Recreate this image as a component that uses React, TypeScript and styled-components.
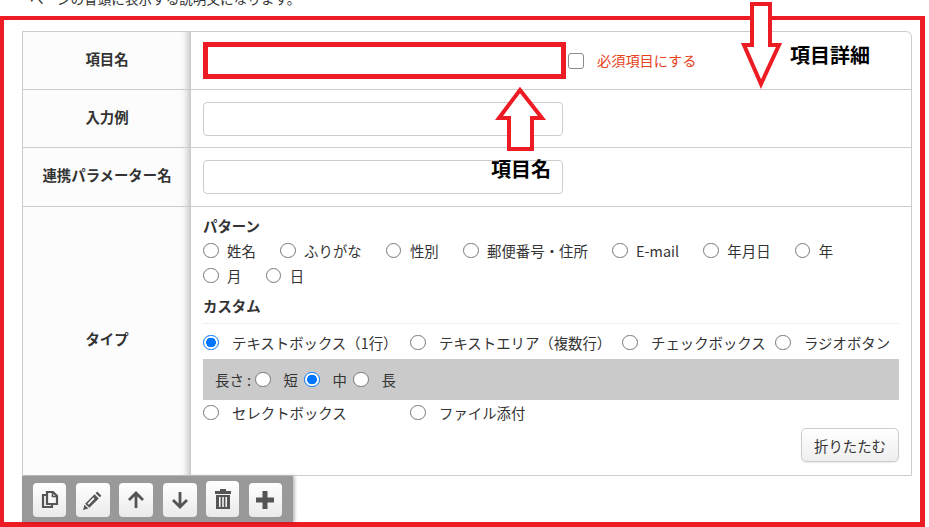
import styled, { createGlobalStyle } from "styled-components";

const GlobalStyle = createGlobalStyle`
  html, body {
    margin: 0;
    padding: 0;
    background: #fff;
    overflow: hidden;
  }
  body {
    font-family: "Noto Sans CJK JP", "Noto Sans", sans-serif;
    font-size: 14.4px;
    color: #333;
  }
`;

const Page = styled.div`
  position: relative;
  width: 929px;
  height: 527px;
  overflow: hidden;
`;

const Caption = styled.p`
  height: 16px;
  margin: 0;
  padding: 0 0 11px 30px;
  box-sizing: border-box;
  display: flex;
  align-items: flex-end;
  font-size: 13.6px;
  line-height: 14px;
  white-space: nowrap;
`;

const Frame = styled.div`
  width: 925px;
  height: 511px;
  box-sizing: border-box;
  border: solid #ed1c24;
  border-width: 4px 5px 5px 4px;
  padding: 11px 8px 0 18px;
`;

const Table = styled.div`
  border: 1px solid #ccc;
  border-radius: 0 6px 0 0;
  overflow: hidden;
`;

const Row = styled.div<{ $height: number }>`
  display: grid;
  grid-template-columns: 168px 1fr;
  height: ${(p) => p.$height}px;
  border-top: 1px solid #ccc;

  &:first-child {
    border-top: 0;
  }
`;

const Label = styled.div`
  display: flex;
  align-items: center;
  justify-content: center;
  padding-bottom: 3px;
  background: #fcfcfc;
  box-shadow: inset -10px 0 8px -8px rgba(0, 0, 0, 0.3);
  font-weight: 700;
  font-size: 14.4px;
  line-height: 1;
  color: #333;
`;

const Cell = styled.div`
  display: flex;
  align-items: center;
  padding-left: 12px;
`;

const TextInput = styled.input<{ $marked?: boolean }>`
  box-sizing: border-box;
  margin: 0;
  background: #fff;
  outline: none;
  width: ${(p) => (p.$marked ? 363 : 360)}px;
  height: ${(p) => (p.$marked ? 37 : 34)}px;
  border: ${(p) => (p.$marked ? "5px solid #ed1c24" : "1px solid #ccc")};
  border-radius: ${(p) => (p.$marked ? 0 : 4)}px;
`;

const Checkbox = styled.input`
  appearance: none;
  box-sizing: border-box;
  width: 16px;
  height: 16px;
  margin: 1px 13px 0 2px;
  background: #fff;
  border: 1.5px solid #8a8a8a;
  border-radius: 3px;
`;

const Required = styled.span`
  color: #e5431b;
  font-size: 14.2px;
  line-height: 1;
`;

const TypeCell = styled.div`
  padding: 10px 12px 0;
`;

const GroupTitle = styled.div`
  font-weight: 700;
  font-size: 14.4px;
  line-height: 18px;
  color: #333;
`;

const PatternList = styled.div`
  display: flex;
  flex-wrap: wrap;
  column-gap: 24.3px;
  padding-right: 40px;
  margin: 3px 0 9px;
`;

const RadioItem = styled.label<{ $gap?: number }>`
  display: inline-flex;
  align-items: center;
  height: 25px;
  column-gap: ${(p) => p.$gap ?? 8.5}px;
  font-size: 14.4px;
  white-space: nowrap;
`;

const Radio = styled.input.attrs({ type: "radio" })`
  appearance: none;
  box-sizing: border-box;
  width: 15.5px;
  height: 15.5px;
  margin: 0;
  flex: none;
  background: #fff;
  border: 1.4px solid #777;
  border-radius: 50%;

  &:checked {
    border-color: #0075ff;
    background: radial-gradient(circle, #0075ff 0 4.6px, #fff 5.1px);
  }
`;

const Divider = styled.hr`
  border: 0;
  border-top: 1px solid #eee;
  margin: 8px 0 6px;
`;

const CustomGrid = styled.div`
  display: grid;
  grid-template-columns: 207px 212px 153px auto;
`;

const LengthBar = styled.div`
  display: flex;
  align-items: center;
  height: 41px;
  margin-top: 4px;
  padding-left: 12px;
  background: #cacaca;
`;

const LengthLabel = styled.span`
  width: 40px;
  white-space: nowrap;
`;

const LengthItem = styled(RadioItem)`
  width: 49px;
  column-gap: 13px;
`;

const Actions = styled.div`
  display: flex;
  justify-content: flex-end;
  margin-top: 3px;
`;

const FoldButton = styled.button`
  width: 98px;
  height: 34px;
  padding: 0;
  border: 1px solid #ccc;
  border-radius: 5px;
  background: linear-gradient(#fff, #eee);
  box-shadow: 0 1px 1px rgba(0, 0, 0, 0.08);
  font-family: inherit;
  font-size: 14.4px;
  color: #333;
`;

const Toolbar = styled.div`
  display: flex;
  align-items: flex-end;
  column-gap: 9.6px;
  width: 271px;
  height: 46px;
  box-sizing: border-box;
  padding: 0 11px 5px;
  background: #999;
  box-shadow: 2px 0 3px rgba(0, 0, 0, 0.25);
`;

const ToolButton = styled.button<{ $tall?: boolean; $wide?: boolean }>`
  display: flex;
  align-items: center;
  justify-content: center;
  flex: none;
  width: ${(p) => (p.$wide ? 34 : 33)}px;
  height: ${(p) => (p.$tall ? 36 : 34)}px;
  padding: 0;
  border: 0;
  border-radius: 4px;
  background: linear-gradient(#fff, #eaeaea);
  color: #555;
`;

const Overlay = styled.svg`
  position: absolute;
  left: 0;
  top: 0;
  pointer-events: none;
`;

const Note = styled.span<{ $left: number; $top: number }>`
  position: absolute;
  left: ${(p) => p.$left}px;
  top: ${(p) => p.$top}px;
  font-size: 20px;
  line-height: 1;
  font-weight: 700;
  color: #000;
  white-space: nowrap;
`;

const patterns = ["姓名", "ふりがな", "性別", "郵便番号・住所", "E-mail", "年月日", "年", "月", "日"];
const customs = ["テキストボックス（1行）", "テキストエリア（複数行）", "チェックボックス", "ラジオボタン"];
const lengths = ["短", "中", "長"];

const CopyIcon = () => (
  <svg width="20" height="20" viewBox="0 0 20 20" fill="none" stroke="currentColor" strokeWidth="2.2">
    <path d="M7 5H3v12h9v-3" />
    <path d="M7 2h6l4 4v8H7z" fill="#f7f7f7" />
    <path d="M12.5 2v4.5H17" strokeWidth="1.6" />
  </svg>
);

const PencilIcon = () => (
  <svg width="23" height="23" viewBox="0 0 22 22" fill="currentColor">
    <path d="M15.5 2.5l4 4L18 8l-4-4z" />
    <path d="M13 5l4 4-9 9-4-4zM11.8 8.2l-5.6 5.6 1.2 1.2 5.6-5.6z" fillRule="evenodd" />
    <path d="M3.3 15l3.7 3.7L2 20z" />
  </svg>
);

const UpIcon = () => (
  <svg width="20" height="20" viewBox="0 0 20 20" fill="none" stroke="currentColor" strokeWidth="2.8">
    <path d="M10 18V3M3 10l7-7 7 7" />
  </svg>
);

const DownIcon = () => (
  <svg width="20" height="20" viewBox="0 0 20 20" fill="none" stroke="currentColor" strokeWidth="2.8">
    <path d="M10 2v15M3 10l7 7 7-7" />
  </svg>
);

const TrashIcon = () => (
  <svg width="18" height="20" viewBox="0 0 18 20" fill="currentColor">
    <path d="M6 0h6v2h5v3H1V2h5z" />
    <path
      fillRule="evenodd"
      d="M2 6h14v14H2zM5 8v10h1.6V8zM8.2 8v10h1.6V8zM11.4 8v10H13V8z"
    />
  </svg>
);

const PlusIcon = () => (
  <svg width="20" height="20" viewBox="0 0 20 20" fill="currentColor">
    <path d="M7.5 1h5v6.5H19v5h-6.5V19h-5v-6.5H1v-5h6.5z" />
  </svg>
);

const App = () => {
  return (
    <Page>
      <GlobalStyle />
      <Caption>ページの冒頭に表示する説明文になります。</Caption>
      <Frame>
        <Table>
          <Row $height={57}>
            <Label>項目名</Label>
            <Cell>
              <TextInput $marked />
              <Checkbox type="checkbox" />
              <Required>必須項目にする</Required>
            </Cell>
          </Row>
          <Row $height={57}>
            <Label>入力例</Label>
            <Cell>
              <TextInput />
            </Cell>
          </Row>
          <Row $height={58}>
            <Label>連携パラメーター名</Label>
            <Cell>
              <TextInput />
            </Cell>
          </Row>
          <Row $height={268}>
            <Label>タイプ</Label>
            <TypeCell>
              <GroupTitle>パターン</GroupTitle>
              <PatternList>
                {patterns.map((name) => (
                  <RadioItem key={name}>
                    <Radio name="pattern" />
                    {name}
                  </RadioItem>
                ))}
              </PatternList>
              <GroupTitle>カスタム</GroupTitle>
              <Divider />
              <CustomGrid>
                {customs.map((name, i) => (
                  <RadioItem key={name} $gap={13.5}>
                    <Radio name="custom" defaultChecked={i === 0} />
                    {name}
                  </RadioItem>
                ))}
              </CustomGrid>
              <LengthBar>
                <LengthLabel>長さ :</LengthLabel>
                {lengths.map((name) => (
                  <LengthItem key={name}>
                    <Radio name="length" defaultChecked={name === "中"} />
                    {name}
                  </LengthItem>
                ))}
              </LengthBar>
              <CustomGrid>
                <RadioItem $gap={13.5}>
                  <Radio name="custom" />
                  セレクトボックス
                </RadioItem>
                <RadioItem $gap={13.5}>
                  <Radio name="custom" />
                  ファイル添付
                </RadioItem>
              </CustomGrid>
              <Actions>
                <FoldButton>折りたたむ</FoldButton>
              </Actions>
            </TypeCell>
          </Row>
        </Table>
        <Toolbar>
          <ToolButton><CopyIcon /></ToolButton>
          <ToolButton $wide><PencilIcon /></ToolButton>
          <ToolButton $wide><UpIcon /></ToolButton>
          <ToolButton $wide><DownIcon /></ToolButton>
          <ToolButton $tall><TrashIcon /></ToolButton>
          <ToolButton><PlusIcon /></ToolButton>
        </Toolbar>
      </Frame>

      <Overlay width="929" height="527" viewBox="0 0 929 527">
        <path
          d="M752 4h18v41h9l-18 39-17-39h8z"
          fill="#fff"
          stroke="#ed1c24"
          strokeWidth="4"
        />
        <path
          d="M520 90l22 28h-10v31h-23v-31h-10z"
          fill="#fff"
          stroke="#ed1c24"
          strokeWidth="4"
        />
      </Overlay>
      <Note $left={790} $top={45}>項目詳細</Note>
      <Note $left={491} $top={159}>項目名</Note>
    </Page>
  );
};

export default App;
